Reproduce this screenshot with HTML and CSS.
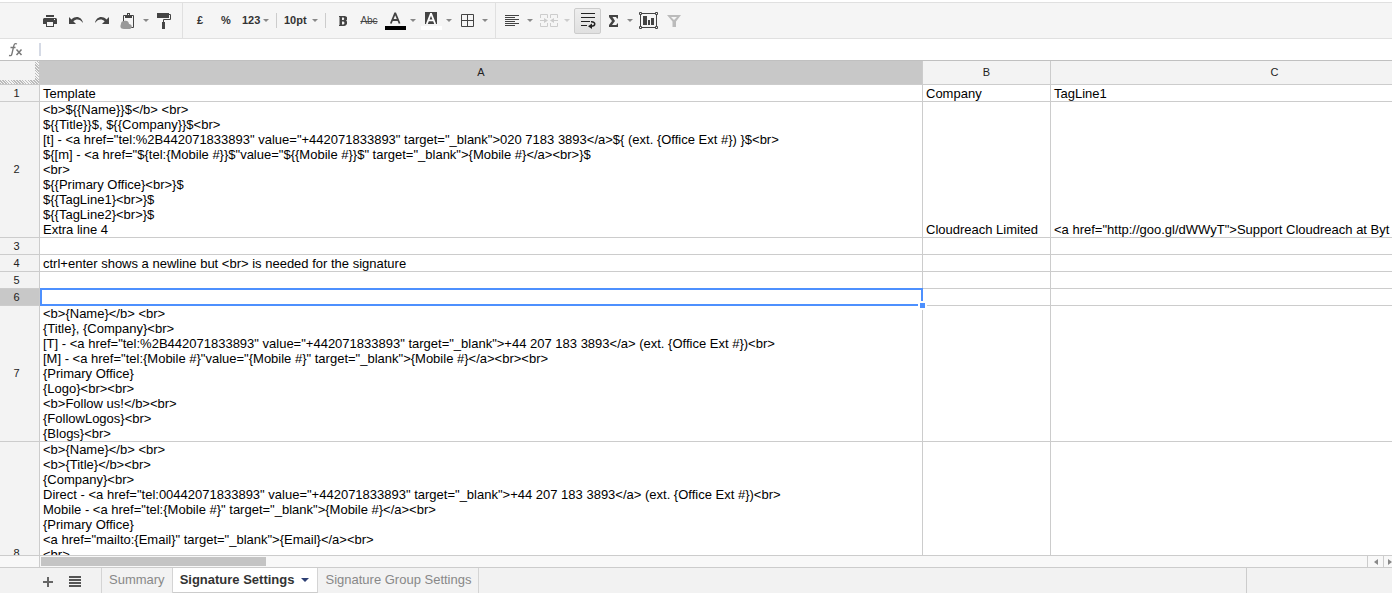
FILE: index.html
```html
<!DOCTYPE html>
<html lang="en">
<head>
<meta charset="utf-8">
<title>Signature Settings</title>
<link rel="stylesheet" href="styles.css">
</head>
<body>
<div class="app">
  <div class="toolbar" role="toolbar" aria-label="Formatting">
    <div class="group group-edit">
      <button class="tool" aria-label="Print"><svg width="14" height="12" viewBox="0 0 14 12"><path fill="#444" d="M3 0h8v2H3zM1 3h12l1 1v5h-3v3H3V9H0V4z"/><path fill="#f5f5f5" d="M4 7h6v4H4zM11 4h1v1h-1z"/></svg></button>
      <button class="tool" aria-label="Undo"><svg width="16" height="14" viewBox="0 0 16 14"><path fill="#444" d="M1 3v7h7L5.300 7.300C8.500 4.600 12 5 15 9c-1-6-7-8-11.500-3.500z"/></svg></button>
      <button class="tool" aria-label="Redo"><svg width="16" height="14" viewBox="0 0 16 14"><path fill="#444" d="M15 3v7H8l2.700-2.700C7.500 4.600 4 5 1 9c1-6 7-8 11.500-3.500z"/></svg></button>
      <button class="tool" aria-label="Web clipboard"><svg width="16" height="16" viewBox="0 0 16 16"><path fill="none" stroke="#444" d="M3.500 9V2.500h10v12H10"/><path fill="#444" d="M5 2h2V0h3v2h2v3H5z"/><path fill="#f5f5f5" d="M8 1h1v1H8z"/><path fill="#999" d="M1 11a3 3 0 0 1 3-3c2-1 5 0 5 3 3 0 4 4 1 5H4c-4 0-4-3-3-5z"/></svg></button>
      <button class="drop" aria-label="Clipboard options"><span class="caret"></span></button>
      <button class="tool" aria-label="Paint format"><svg width="14" height="16" viewBox="0 0 14 16"><path fill="#444" d="M0 0h12v5H0zM5 9h3v7H5z"/><path fill="none" stroke="#444" d="M12 1.500h1.500v5h-7V9"/></svg></button>
    </div>
    <div class="group group-format">
      <button class="tool tool-text" aria-label="Format as currency">£</button>
      <button class="tool tool-text" aria-label="Format as percent">%</button>
      <button class="menu menu-number">123<span class="caret"></span></button>
      <span class="rule"></span>
      <button class="menu menu-size">10pt<span class="caret"></span></button>
      <span class="rule"></span>
      <button class="tool" aria-label="Bold"><svg width="8" height="10" viewBox="0 0 8 10"><path fill="#444" fill-rule="evenodd" d="M0 0h5c4 0 4 3.800 2 4.600C9 5.300 8.500 10 5 10H0V9h.5V1H0zm3 1.500V4h1.200c1.300 0 1.300-2.500 0-2.500zm0 4v3h1.300c1.500 0 1.500-3 0-3z"/></svg></button>
      <button class="tool tool-strike" aria-label="Strikethrough">Abc</button>
      <button class="tool" aria-label="Text colour"><svg width="21" height="18" viewBox="0 0 21 18"><path fill="none" stroke="#444" stroke-width="1.800" d="M5.800 11.500 10 1.500h.4l4.200 10M7.500 8h6"/><path d="M0 14h21v4H0z"/></svg></button>
      <button class="drop" aria-label="Text colour options"><span class="caret"></span></button>
      <button class="tool" aria-label="Background colour"><svg width="21" height="18" viewBox="0 0 21 18"><path fill="#444" d="M4 0h12v12H4z"/><path fill="none" stroke="#fff" stroke-width="1.800" d="M5.800 12 9.800 2h.4l4 10M7.300 8.300h6"/><path fill="#fff" d="M0 14h21v4H0z"/></svg></button>
      <button class="drop" aria-label="Background options"><span class="caret"></span></button>
      <button class="tool" aria-label="Borders"><svg width="13" height="13" viewBox="0 0 13 13"><path fill="none" stroke="#444" d="M.5.5h12v12H.5zM6.500 0v13M0 6.500h13"/></svg></button>
      <button class="drop" aria-label="Border options"><span class="caret"></span></button>
    </div>
    <div class="group group-layout">
      <button class="tool" aria-label="Align"><svg width="16" height="12" viewBox="0 0 16 12"><path stroke="#444" d="M1 .5h14M1 2.500h10M1 4.500h14M1 6.500h10M1 8.500h14M1 10.500h10"/></svg></button>
      <button class="drop" aria-label="Align options"><span class="caret"></span></button>
      <button class="tool tool-merge" aria-label="Merge cells" disabled><svg width="20" height="14" viewBox="0 0 20 14"><path fill="none" stroke="#ccc" d="M8.500 4V.5h-7V4M1.500 9v3.500h7V9M11.500 4V.5h7V4M18.500 9v3.500h-7V9M1 6.500h6M19 6.500h-6"/><path fill="#ccc" d="M5 4l4 2.500L5 9zM15 4l-4 2.500L15 9z"/></svg></button>
      <button class="drop drop-off" aria-label="Merge options" disabled><span class="caret"></span></button>
      <button class="tool tool-on" aria-label="Wrap text" aria-pressed="true"><svg width="16" height="16" viewBox="0 0 16 16"><path fill="none" stroke="#222" d="M1 .5h14M1 4.500h14M1 8.500h9M1 12.500h6"/><path fill="none" stroke="#222" stroke-width="1.500" d="M11 8.800c5-.5 5 4.500 0 4.500"/><path fill="#222" d="M12 10.500v5.500l-4-2.700z"/></svg></button>
      <button class="tool tool-sum" aria-label="Functions"><svg width="11" height="12" viewBox="0 0 11 12"><path fill="#444" d="M1 0h9v3.500H9L8 2H4.500L7 6l-3 4h4.500L9 8.500h1V12H1v-2L4 6 1 2z"/></svg></button>
      <button class="drop" aria-label="Function options"><span class="caret"></span></button>
      <button class="tool" aria-label="Insert chart"><svg width="19" height="17" viewBox="0 0 19 17"><path fill="none" stroke="#444" d="M1.500 1.500h16v14h-16z"/><path fill="#f5f5f5" stroke="#444" d="M.5.5h2v2h-2zM16.500.5h2v2h-2zM.5 14.500h2v2h-2zM16.500 14.500h2v2h-2z"/><path fill="#444" d="M4 4h4v9H4zM9 8h2v5H9zM12 6h3v7h-3z"/></svg></button>
      <button class="tool" aria-label="Filter"><svg width="14" height="12" viewBox="0 0 14 12"><path fill="#bbb" fill-rule="evenodd" d="M0 0h14L9 6.500V12H5.500V6.500zM4 2l3 3 3-3z"/></svg></button>
    </div>
  </div>

  <div class="formula">
    <label class="fx" for="formula-input"><svg width="16" height="16" viewBox="0 0 16 16"><path fill="none" stroke="#777" stroke-width="1.300" d="M9 2C6.500 1 6 2.500 5.500 5L4 11.500C3.600 13.500 3 14 1 13.500M2.500 5.500h5"/><path fill="none" stroke="#777" stroke-width="1.500" d="M8.500 7.500l5 5.500M13.500 7.500l-5 5.500"/></svg></label>
    <input class="formula-input" id="formula-input" type="text" aria-label="Formula">
  </div>

  <div class="sheet">
    <table class="grid">
      <colgroup><col class="col-num"><col class="col-a"><col class="col-b"><col class="col-c"></colgroup>
      <thead>
        <tr><th class="corner"></th><th class="picked">A</th><th>B</th><th>C</th></tr>
      </thead>
      <tbody>
        <tr><th>1</th><td>Template</td><td>Company</td><td>TagLine1</td></tr>
        <tr><th>2</th><td>&lt;b&gt;${{Name}}$&lt;/b&gt; &lt;br&gt;
${{Title}}$, ${{Company}}$&lt;br&gt;
[t] - &lt;a href="tel:%2B442071833893" value="+442071833893" target="_blank"&gt;020 7183 3893&lt;/a&gt;${ (ext. {Office Ext #}) }$&lt;br&gt;
${[m] - &lt;a href="${tel:{Mobile #}}$"value="${{Mobile #}}$" target="_blank"&gt;{Mobile #}&lt;/a&gt;&lt;br&gt;}$
&lt;br&gt;
${{Primary Office}&lt;br&gt;}$
${{TagLine1}&lt;br&gt;}$
${{TagLine2}&lt;br&gt;}$
Extra line 4</td><td>Cloudreach Limited</td><td>&lt;a href="http://goo.gl/dWWyT"&gt;Support Cloudreach at Byt</td></tr>
        <tr><th>3</th><td></td><td></td><td></td></tr>
        <tr><th>4</th><td>ctrl+enter shows a newline but &lt;br&gt; is needed for the signature</td><td></td><td></td></tr>
        <tr><th>5</th><td></td><td></td><td></td></tr>
        <tr><th class="picked">6</th><td class="active"><span class="selection"></span><span class="handle"></span></td><td></td><td></td></tr>
        <tr><th>7</th><td>&lt;b&gt;{Name}&lt;/b&gt; &lt;br&gt;
{Title}, {Company}&lt;br&gt;
[T] - &lt;a href="tel:%2B442071833893" value="+442071833893" target="_blank"&gt;+44 207 183 3893&lt;/a&gt; (ext. {Office Ext #})&lt;br&gt;
[M] - &lt;a href="tel:{Mobile #}"value="{Mobile #}" target="_blank"&gt;{Mobile #}&lt;/a&gt;&lt;br&gt;&lt;br&gt;
{Primary Office}
{Logo}&lt;br&gt;&lt;br&gt;
&lt;b&gt;Follow us!&lt;/b&gt;&lt;br&gt;
{FollowLogos}&lt;br&gt;
{Blogs}&lt;br&gt;</td><td></td><td></td></tr>
        <tr class="tall"><th>8</th><td>&lt;b&gt;{Name}&lt;/b&gt; &lt;br&gt;
&lt;b&gt;{Title}&lt;/b&gt;&lt;br&gt;
{Company}&lt;br&gt;
Direct - &lt;a href="tel:00442071833893" value="+442071833893" target="_blank"&gt;+44 207 183 3893&lt;/a&gt; (ext. {Office Ext #})&lt;br&gt;
Mobile - &lt;a href="tel:{Mobile #}" target="_blank"&gt;{Mobile #}&lt;/a&gt;&lt;br&gt;
{Primary Office}
&lt;a href="mailto:{Email}" target="_blank"&gt;{Email}&lt;/a&gt;&lt;br&gt;
&lt;br&gt;</td><td></td><td></td></tr>
      </tbody>
    </table>
  </div>

  <div class="scroll">
    <div class="track"><div class="thumb"></div></div>
    <button class="step" aria-label="Scroll left"><svg width="4" height="6" viewBox="0 0 4 6"><path fill="#888" d="M4 0v6L0 3z"/></svg></button>
    <button class="step step-right" aria-label="Scroll right"><svg width="4" height="6" viewBox="0 0 4 6"><path fill="#888" d="M0 0v6l4-3z"/></svg></button>
  </div>

  <div class="tabs">
    <div class="tab-tools">
      <button class="tab-tool" aria-label="Add sheet"><svg width="12" height="12" viewBox="0 0 12 12"><path stroke="#666" stroke-width="2" d="M6 1v10M1 6h10"/></svg></button>
      <button class="tab-tool" aria-label="All sheets"><svg width="12" height="12" viewBox="0 0 12 12"><path stroke="#555" stroke-width="2" d="M0 1h12M0 4h12M0 7h12M0 10h12"/></svg></button>
    </div>
    <button class="tab">Summary</button>
    <button class="tab tab-active">Signature Settings<span class="tab-caret"></span></button>
    <button class="tab">Signature Group Settings</button>
    <div class="tabs-end"></div>
  </div>
</div>
</body>
</html>
```
FILE: styles.css
```css
* { box-sizing: border-box; }

body {
  margin: 0;
  background: #fff;
  color: #000;
  font: 13px/15px "Liberation Sans", Arial, sans-serif;
}

button {
  margin: 0;
  padding: 0;
  border: 0;
  background: none;
  color: #333;
  font: inherit;
}

svg { display: block; }

.app {
  display: flex;
  flex-direction: column;
  height: 100vh;
  padding-top: 2px;
  overflow: hidden;
}

/* Toolbar */
.toolbar {
  display: flex;
  flex: none;
  height: 37px;
  border-top: 1px solid #e0e0e0;
  border-bottom: 1px solid #e0e0e0;
  background: #f5f5f5;
}

.group { display: flex; align-items: center; }
.group-edit { padding: 0 5px 0 37px; border-right: 1px solid #e0e0e0; }
.group-format { padding: 0 5px 0 4px; border-right: 1px solid #e0e0e0; }
.group-layout { padding-left: 3px; }

.tool {
  display: flex;
  align-items: center;
  justify-content: center;
  width: 26px;
  height: 26px;
}

.tool-text { font-size: 11px; font-weight: bold; }
.tool-strike { color: #444; font-size: 10px; text-decoration: line-through; }
.tool-merge { margin-left: 1px; }

.tool-on {
  width: 27px;
  margin-left: 2px;
  border: 1px solid #ccc;
  border-radius: 2px;
  background: linear-gradient(#eee, #e0e0e0);
}

.tool-sum { width: 24px; }

.drop {
  display: flex;
  align-items: center;
  justify-content: center;
  width: 10px;
  height: 26px;
}

.caret {
  border: 3px solid transparent;
  border-top-color: #888;
  border-bottom: 0;
}

.drop-off .caret { border-top-color: #ccc; }

.menu {
  display: flex;
  align-items: center;
  justify-content: space-between;
  height: 26px;
  padding: 0 3px;
  font-size: 11px;
  font-weight: bold;
}

.menu-number { width: 33px; }
.menu-size { width: 40px; }
.rule { width: 1px; height: 15px; margin: 0 4px; background: #ccc; }

/* Formula bar */
.formula {
  display: flex;
  flex: none;
  align-items: center;
  height: 22px;
  border-bottom: 1px solid #c0c0c0;
}

.fx { width: 39px; padding-left: 8px; }

.formula-input {
  flex: 1;
  height: 13px;
  padding: 0 4px;
  border: 0;
  border-left: 2px solid #d5dae5;
  outline: 0;
  font: inherit;
}

/* Grid */
.sheet { flex: 1; min-height: 0; overflow: hidden; }

.grid {
  width: 1499px;
  border-spacing: 0;
  table-layout: fixed;
}

.col-num { width: 40px; }
.col-a { width: 883px; }
.col-b { width: 128px; }
.col-c { width: 448px; }

.grid th,
.grid td {
  height: 17px;
  padding: 0;
  border-right: 1px solid #ccc;
  border-bottom: 1px solid #ccc;
}

.grid th {
  background: #f3f3f3;
  color: #222;
  font-size: 11px;
  font-weight: normal;
}

.grid tbody th { padding-right: 6px; }
.grid thead th { height: 24px; }
.grid .picked { background: #c8c8c8; }

.grid td {
  padding-left: 3px;
  vertical-align: bottom;
  white-space: pre;
}

.grid .corner {
  border-color: #c8c8c8;
  background:
    linear-gradient(#f3f3f3, #f3f3f3) 0 0 / 35px 19px no-repeat,
    repeating-linear-gradient(45deg, #bbb 0 1px, #f3f3f3 1px 2px);
}

.grid .tall td { height: 224px; vertical-align: top; }
.grid .active { position: relative; }

.selection {
  position: absolute;
  inset: -1px -1px -1px 0;
  border: 2px solid #4d90fe;
}

.handle {
  position: absolute;
  right: -5px;
  bottom: -5px;
  z-index: 1;
  width: 9px;
  height: 9px;
  border: 2px solid #fff;
  background: #4d90fe;
}

/* Horizontal scrollbar */
.scroll {
  display: flex;
  flex: none;
  height: 13px;
  border-top: 1px solid #ccc;
  border-bottom: 1px solid #ccc;
  background: #f8f8f8;
}

.track {
  flex: 1;
  margin-left: 39px;
  padding: 1px;
  border-left: 1px solid #ccc;
}

.thumb { width: 17%; height: 9px; background: #c4c4c4; }

.step {
  display: flex;
  align-items: center;
  justify-content: center;
  width: 16px;
  border-left: 1px solid #ccc;
}

.step-right { width: 9px; padding-left: 4px; }

/* Sheet tabs */
.tabs {
  display: flex;
  flex: none;
  height: 25px;
  background: #f2f2f2;
}

.tab-tools {
  display: flex;
  align-items: center;
  gap: 15px;
  width: 102px;
  padding: 2px 0 0 42px;
  border-right: 1px solid #d4d4d4;
}

.tab {
  display: flex;
  align-items: center;
  height: 25px;
  padding: 0 7px 2px;
  border-right: 1px solid #d4d4d4;
  color: #888;
}

.tab-active {
  padding: 0 8px 1px 7px;
  border-bottom: 1px solid #ccc;
  background: #fff;
  color: #333;
  font-weight: bold;
}

.tab-caret {
  margin-left: 7px;
  border: 4px solid transparent;
  border-top-color: #2d3f74;
  border-bottom: 0;
}

.tabs-end {
  width: 146px;
  margin-left: auto;
  border-left: 1px solid #ccc;
}
```
